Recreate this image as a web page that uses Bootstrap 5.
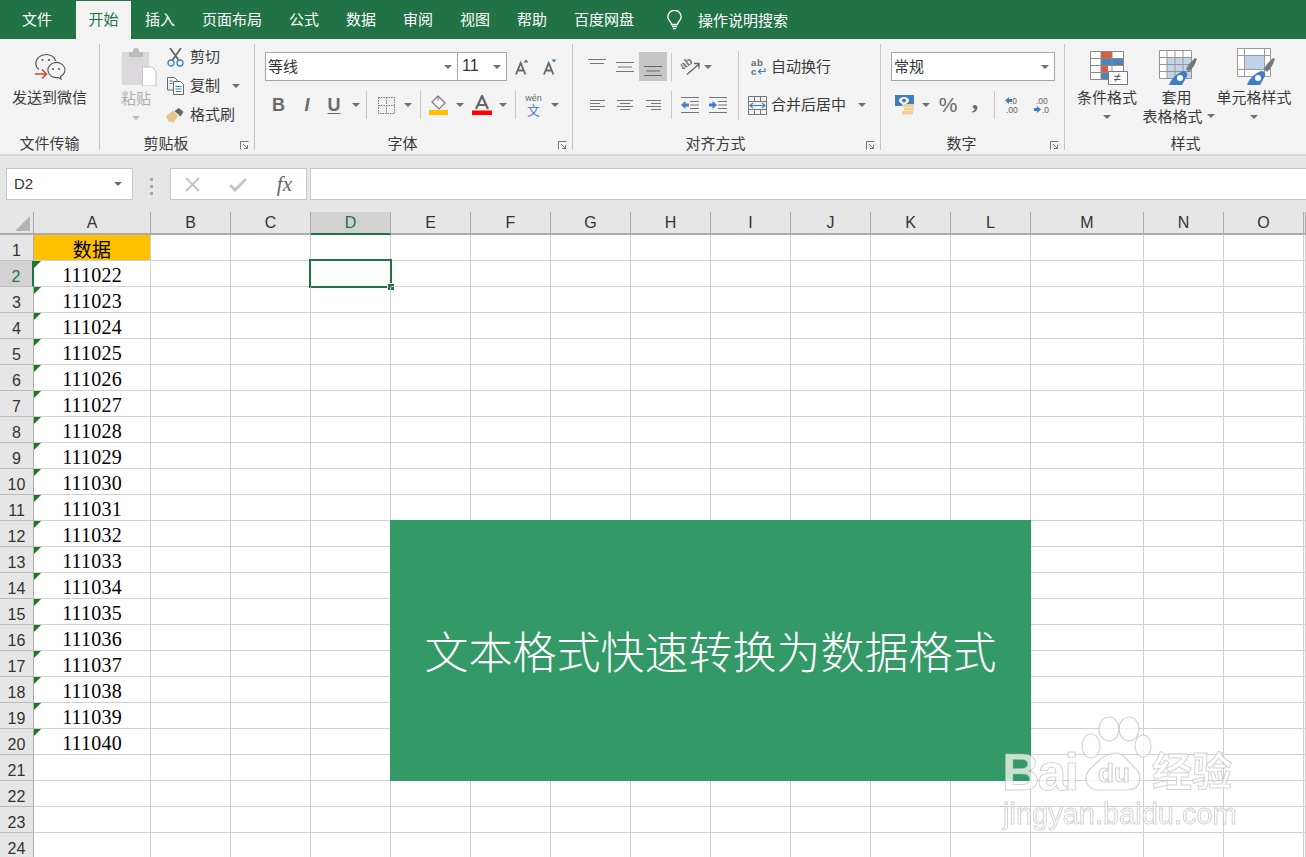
<!DOCTYPE html>
<html lang="zh-CN">
<head>
  <meta charset="UTF-8">
  <title>Excel</title>
  <link href="https://cdn.jsdelivr.net/npm/bootstrap@5.3.3/dist/css/bootstrap.min.css" rel="stylesheet">
  <style>
    body { font-family: "Noto Sans CJK SC", "Liberation Sans", sans-serif; background: #fff; height: 857px; width: 1306px; overflow: hidden; position: relative; color: #3b3b3b; font-size: 15px; line-height: 20px; white-space: nowrap; }
    svg { display: block; flex: none; }

    /* title tabs */
    .tabbar { background: #217346; height: 39px; flex-wrap: nowrap; }
    .tabbar .nav-link { color: #fff; padding: 0; height: 38px; margin-top: 1px; line-height: 36px; text-align: center; }
    .tabbar .nav-link.active { background: #f3f3f3; color: #217346; }
    .t74 { width: 74px; margin-right: 2px; } .t55 { width: 55px; margin-right: 1px; } .t56 { width: 56px; } .t58 { width: 58px; } .t88 { width: 88px; }
    .bulb { margin-left: 19px; margin-right: 16px; }
    .tellme { color: #fff; }

    /* ribbon */
    .ribbon { background: #f3f3f3; height: 117px; padding-top: 5px; border-bottom: 2px solid #d6d6d6; }
    .grp { height: 106px; border-right: 1px solid #c6c6c6; position: relative; flex: none; }
    .g1 { width: 100px; } .g2 { width: 155px; } .g3 { width: 318px; } .g4 { width: 308px; } .g5 { width: 184px; } .g6 { width: 241px; border-right: 0; }
    .grp-body { height: 92px; }
    .grp-label { height: 14px; line-height: 14px; text-align: center; font-size: 15px; }
    .has-launch .grp-label { padding-right: 22px; }
    .launch { position: absolute; right: 5px; bottom: 0; }
    .car { width: 0; height: 0; border-left: 4px solid transparent; border-right: 4px solid transparent; border-top: 4px solid #6f6f6f; flex: none; display: block; }
    .car.lt { border-top-color: #b9b9b9; }
    .faint { color: #aeaeae; }
    .vsep { width: 1px; height: 28px; background: #c6c6c6; flex: none; }
    .cell { height: 29px; flex: none; display: flex; align-items: center; justify-content: center; }
    .w8 { width: 8px; } .w9 { width: 9px; } .w10 { width: 10px; } .w12 { width: 12px; } .w14 { width: 14px; } .w16 { width: 16px; } .w20 { width: 20px; } .w24 { width: 24px; } .w26 { width: 26px; } .w27 { width: 27px; } .w28 { width: 28px; } .w30 { width: 30px; } .w31 { width: 31px; }
    .w5 { width: 5px; }
    .hl { background: #c6c6c6; }
    .r1 { height: 29px; margin-top: 8px; }
    .r2 { height: 30px; margin-top: 9px; }
    .pl10 { padding-left: 10px; }
    .nudge { padding-left: 4px; }
    .combo { height: 29px; background: #fff; border: 1px solid #a6a6a6; display: flex; align-items: center; padding: 0 5px 0 2px; justify-content: space-between; flex: none; color: #333; }
    .combo > span:first-child { padding-bottom: 2px; }
    .cf { width: 193px; } .cs { width: 50px; margin-left: -1px; padding-left: 4px; } .cn { width: 164px; }
    .size-num { font-family: "Liberation Sans", sans-serif; font-size: 16px; }
    .glyph { font-family: "Liberation Sans", sans-serif; font-weight: 700; color: #6a6a6a; font-size: 18px; }
    .glyph-i { font-style: italic; }
    .glyph-u { text-decoration: underline; text-underline-offset: 2px; }
    .glyph-n { font-family: "Liberation Sans", sans-serif; color: #6a6a6a; font-size: 21px; }
    .glyph-c { font-family: "Liberation Serif", serif; font-size: 26px; line-height: 16px; padding-bottom: 8px; }
    .wen { font-family: "Liberation Sans", sans-serif; font-size: 9px; line-height: 10px; color: #666; display: block; text-align: center; }
    .wen-c { font-size: 13px; line-height: 14px; color: #4a86c0; display: block; text-align: center; }

    .col-paste { width: 64px; padding: 4px 0 0 8px; }
    .paste-ico { margin-left: 5px; }
    .row-clip { height: 26px; margin-bottom: 3px; }
    .row-clip > span:nth-child(2) { padding-bottom: 2px; }
    .ico22 { width: 22px; margin-right: 4px; display: flex; justify-content: center; }
    .after-copy { margin-left: 12px; }
    .wrap-col { border-left: 1px solid #c6c6c6; height: 69px; margin-top: 7px; width: 142px; }
    .wrap-r1 { height: 29px; margin-top: 1px; padding-left: 12px; }
    .wrap-r2 { height: 30px; margin-top: 9px; padding-left: 9px; }
    .wrap-r1 span, .wrap-r2 span:first-of-type { padding-bottom: 2px; }
    .wrap-r2 .car { padding: 0; }
    .gap6 { margin-right: 5px; } .gap5 { margin-right: 4px; }
    .merge-car { margin-left: 12px; }
    .sty-icon { height: 37px; margin-top: 4px; display: flex; align-items: flex-end; }
    .sty-c1 { width: 71px; padding-left: 13px; }
    .sty-c2 { width: 81px; }
    .sty-c3 { width: 74px; }
    .sty-t { margin-top: 2px; height: 20px; }
    .sty-t2 { height: 19px; padding-bottom: 2px; }
    .sty-s1 { margin-left: 3px; } .sty-s2 { margin-left: 2px; } .sty-s3 { margin-left: 4px; }
    .wx-top { padding-top: 9px; }
    .wx-t { margin-top: 7px; }

    /* formula bar */
    .fbar { background: #e6e6e6; height: 56px; padding-top: 12px; }
    .fbox { height: 32px; background: #fff; border: 1px solid #c6c6c6; flex: none; }
    .namebox { width: 127px; margin-left: 6px; padding: 0 10px 0 7px; font-family: "Liberation Sans", sans-serif; font-size: 15px; color: #333; }
    .dots { width: 37px; }
    .dots i { display: block; width: 3px; height: 3px; background: #a6a6a6; margin: 2px 0; }
    .fbtn { width: 137px; padding: 0 14px; }
    .fx-mark { font-family: "Liberation Serif", serif; font-style: italic; font-size: 21px; color: #666; }
    .finput { flex: 1; margin-left: 3px; border-right: 0; }

    /* sheet */
    .sheet { border-collapse: separate; border-spacing: 0; table-layout: fixed; width: 1306px; }
    .sheet th { background: #e6e6e6; font-family: "Liberation Sans", sans-serif; font-weight: 400; font-size: 16px; text-align: center; color: #333; padding: 0; border-right: 1px solid #ababab; border-bottom: 2px solid #ababab; height: 23px; line-height: 20px; }
    .sheet th.corner { position: relative; }
    .sheet tbody th { border-bottom: 1px solid #bdbdbd; height: 26px; padding-top: 7px; line-height: 18px; }
    .sheet td { border-right: 1px solid #d0d0d0; border-bottom: 1px solid #d0d0d0; height: 26px; padding: 3px 0 0; text-align: center; position: relative; font-family: "Liberation Serif", serif; font-size: 20px; letter-spacing: .2px; line-height: 22px; color: #000; }
    .sheet th.cursel { background: #d2d2d2; color: #217346; border-bottom-color: #217346; }
    .sheet tbody th.cursel { border-bottom-color: #bdbdbd; border-right: 2px solid #217346; }
    .sheet td.head { background: #ffc000; font-family: "Noto Sans CJK SC", sans-serif; font-size: 19px; padding-top: 2px; line-height: 23px; }
    .tri::before { content: ""; position: absolute; left: 0; top: 0; border-top: 7px solid #1a7a1a; border-right: 7px solid transparent; }
    .tri-corner { position: absolute; left: 15px; bottom: 2px; border-bottom: 15px solid #b4b4b4; border-left: 15px solid transparent; }
    .selbox { position: absolute; left: -2px; top: -2px; width: 83px; height: 29px; border: 2px solid #217346; }
    .selbox::after { content: ""; position: absolute; right: -4px; bottom: -4px; width: 7px; height: 7px; background: #217346; border: 1px solid #fff; border-width: 1px 0 0 1px; }

    /* green banner */
    .banner { position: absolute; left: 390px; top: 520px; width: 641px; height: 261px; background: #339966; color: #fff; font-size: 44px; font-weight: 300; line-height: 261px; text-align: center; }

    /* watermark */
    .wm { position: absolute; left: 1000px; top: 715px; width: 240px; height: 120px; filter: blur(.4px); }
    .wm-txt { position: absolute; font-family: "Liberation Sans", sans-serif; font-weight: 700; color: rgba(255,255,255,.72); -webkit-text-stroke: 1px rgba(170,170,170,.5); line-height: 1; }
    .wm-bai { left: 2px; top: 31px; font-size: 52px; letter-spacing: -2px; }
    .wm-cn { left: 152px; top: 34px; font-size: 40px; font-family: "Noto Sans CJK SC", sans-serif; }
    .wm-url { left: 3px; top: 85px; font-size: 29px; font-weight: 400; }
    .wm svg { position: absolute; left: 78px; top: 0; }
  </style>
</head>
<body>
  <ul class="nav tabbar align-items-start">
    <li class="nav-item"><a class="nav-link t74">文件</a></li>
    <li class="nav-item"><a class="nav-link t55 active">开始</a></li>
    <li class="nav-item"><a class="nav-link t56">插入</a></li>
    <li class="nav-item"><a class="nav-link t88">页面布局</a></li>
    <li class="nav-item"><a class="nav-link t56">公式</a></li>
    <li class="nav-item"><a class="nav-link t58">数据</a></li>
    <li class="nav-item"><a class="nav-link t56">审阅</a></li>
    <li class="nav-item"><a class="nav-link t58">视图</a></li>
    <li class="nav-item"><a class="nav-link t56">帮助</a></li>
    <li class="nav-item"><a class="nav-link t88">百度网盘</a></li>
    <li class="d-flex align-items-center h-100 tellme">
      <svg class="bulb" width="15" height="20" viewBox="0 0 15 20" fill="none" stroke="#fff" stroke-width="1.3"><path d="M4.600 14.500c0-2.600-3.800-4.200-3.800-7.500a6.700 6.700 0 0 1 13.400 0c0 3.300-3.800 4.900-3.800 7.500z"/><path d="M5 16.500h5M6 18.700h3"/></svg>
      <span>操作说明搜索</span>
    </li>
  </ul>

  <div class="ribbon d-flex">
    <!-- 文件传输 -->
    <div class="grp g1 d-flex flex-column">
      <div class="grp-body d-flex flex-column align-items-center wx-top">
        <svg width="32" height="27" viewBox="0 0 32 27" fill="none" stroke="#555" stroke-width="1.1">
          <path d="M5 16.500C2.800 15 1.800 13 1.800 10.800 1.800 5.600 6.400 1.500 12 1.500c4.600 0 8.500 2.700 9.700 6.500"/>
          <path d="M14 18a8.500 7.500 0 1 1 12.500 5.500l.6 2.500-3.100-1.500A8.500 7.500 0 0 1 14 18z" fill="#f3f3f3"/>
          <circle cx="8.500" cy="7" r="1.100" fill="#555" stroke="none"/><circle cx="15" cy="7" r="1.100" fill="#555" stroke="none"/>
          <circle cx="19" cy="16" r="1" fill="#555" stroke="none"/><circle cx="25" cy="16" r="1" fill="#555" stroke="none"/>
          <path d="M1 21h11M8 16.500l4.500 4.500L8 25.500" stroke="#c8492c" stroke-width="1.500"/>
        </svg>
        <div class="wx-t">发送到微信</div>
      </div>
      <div class="grp-label">文件传输</div>
    </div>

    <!-- 剪贴板 -->
    <div class="grp g2 has-launch d-flex flex-column">
      <div class="grp-body d-flex">
        <div class="col-paste d-flex flex-column align-items-center">
          <svg class="paste-ico" width="36" height="38" viewBox="0 0 36 38">
            <path d="M1 4h27v33H1z" fill="#dcd9dc"/>
            <path d="M8 4h4V3C12 1.200 13 0 15 0s3 1.200 3 3v1h4v5H8z" fill="#bdbabd"/>
            <path d="M21.500 19H31l4 4v15H21.500z" fill="#fff" stroke="#c4c2c4"/>
          </svg>
          <div class="faint sty-t">粘贴</div>
          <span class="car lt mt-2"></span>
        </div>
        <div class="d-flex flex-column">
          <div class="row-clip d-flex align-items-center">
            <span class="ico22"><svg width="17" height="19" viewBox="0 0 17 19" fill="none"><path d="M3 0l8.500 12M14 0L5.500 12" stroke="#666" stroke-width="1.800"/><circle cx="4" cy="15" r="3" stroke="#3f7fc0" stroke-width="1.300"/><circle cx="13" cy="15" r="3" stroke="#3f7fc0" stroke-width="1.300"/></svg></span>
            <span>剪切</span>
          </div>
          <div class="row-clip d-flex align-items-center">
            <span class="ico22"><svg width="17" height="18" viewBox="0 0 17 18" fill="none" stroke="#666"><path d="M.5.500h7l2.500 2.500v10H.5z" fill="#f3f3f3"/><path d="M6.500 4.500h7l3 3v10h-10z" fill="#fff"/><path d="M8.500 9.500h6M8.500 12h6M8.500 14.500h6M2.500 4h3M2.500 6.500h3" stroke="#3f7fc0"/></svg></span>
            <span>复制</span>
            <span class="car after-copy"></span>
          </div>
          <div class="row-clip d-flex align-items-center">
            <span class="ico22"><svg width="18" height="15" viewBox="0 0 18 15"><path d="M0 8.500l7-6 5 5.500-5 7-2-1.500-1.500 1z" fill="#e6c48a"/><path d="M8.500 3L13 0l4.500 4-3 4.500z" fill="#666"/></svg></span>
            <span>格式刷</span>
          </div>
        </div>
      </div>
      <div class="grp-label">剪贴板</div>
      <svg class="launch" width="9" height="9" viewBox="0 0 9 9" fill="none" stroke="#777"><path d="M.5 8.500v-8h8M3 3l4.500 4.500M7.500 4v3.500H4"/></svg>
    </div>

    <!-- 字体 -->
    <div class="grp g3 has-launch d-flex flex-column">
      <div class="grp-body pl10">
        <div class="d-flex r1">
          <div class="combo cf"><span>等线</span><span class="car"></span></div>
          <div class="combo cs"><span class="size-num">11</span><span class="car"></span></div>
          <div class="cell w27 nudge"><svg width="15" height="16" viewBox="0 0 15 16"><path d="M1 15.500L5.700 4 10.400 15.500M2.800 11.500h5.800" fill="none" stroke="#6a6a6a" stroke-width="1.900"/><path d="M8.500 3.500L11 .5l2.500 3z" fill="#6a6a6a"/></svg></div>
          <div class="cell w28 nudge"><svg width="15" height="16" viewBox="0 0 15 16"><path d="M1 15.500L5.700 4 10.400 15.500M2.800 11.500h5.800" fill="none" stroke="#6a6a6a" stroke-width="1.900"/><path d="M8.500.5L11 3.500l2.500-3z" fill="#3f7fc0"/></svg></div>
        </div>
        <div class="d-flex r2 align-items-center">
          <div class="cell w27 glyph">B</div>
          <div class="cell w30 glyph glyph-i">I</div>
          <div class="cell w24 glyph glyph-u">U</div>
          <div class="cell w20"><span class="car"></span></div>
          <div class="cell w5 justify-content-start"><span class="vsep"></span></div>
          <div class="cell w31"><svg width="17" height="17" viewBox="0 0 17 17" fill="none" stroke="#777" stroke-dasharray="1.500 1"><path d="M.5.500h16v16H.5zM8.500.500v16M.5 8.500h16"/></svg></div>
          <div class="cell w12"><span class="car"></span></div>
          <div class="cell w12"><span class="vsep"></span></div>
          <div class="cell w26"><svg width="20" height="20" viewBox="0 0 20 20"><path d="M9 1l7 7-6 6-7-7z" fill="#fff" stroke="#777" stroke-width="1.200"/><path d="M9 1V6" stroke="#777"/><path d="M0 15h19v5H0z" fill="#ffc000"/></svg></div>
          <div class="cell w16"><span class="car"></span></div>
          <div class="cell w28"><svg width="20" height="20" viewBox="0 0 20 20"><path d="M4 14L10 1l6 13M6 10h8" fill="none" stroke="#666" stroke-width="2.200"/><path d="M0 15.500h20V20H0z" fill="#ff0000"/></svg></div>
          <div class="cell w14"><span class="car"></span></div>
          <div class="cell w10"><span class="vsep"></span></div>
          <div class="cell w27"><span><span class="wen">wén</span><span class="wen-c">文</span></span></div>
          <div class="cell w16"><span class="car"></span></div>
        </div>
      </div>
      <div class="grp-label">字体</div>
      <svg class="launch" width="9" height="9" viewBox="0 0 9 9" fill="none" stroke="#777"><path d="M.5 8.500v-8h8M3 3l4.500 4.500M7.500 4v3.500H4"/></svg>
    </div>

    <!-- 对齐方式 -->
    <div class="grp g4 has-launch d-flex flex-column">
      <div class="grp-body d-flex">
        <div class="pl10">
          <div class="d-flex r1">
            <div class="cell w28"><svg width="18" height="18" viewBox="0 0 18 18" stroke="#777" fill="none"><path d="M0 1.500h18M2 5.500h14"/></svg></div>
            <div class="cell w28"><svg width="18" height="10" viewBox="0 0 18 10" stroke="#777" fill="none"><path d="M0 .500h18M2 5h14M0 9.500h18"/></svg></div>
            <div class="cell w28 hl"><svg width="18" height="10" viewBox="0 0 18 10" stroke="#666" fill="none" class="mt-2"><path d="M0 .500h18M2 5h14M0 9.500h18"/></svg></div>
            <div class="cell w9"><span class="vsep"></span></div>
            <div class="cell w28"><svg width="24" height="26" viewBox="-2 -4 24 26"><text x="0" y="9" transform="rotate(-35 6 6)" font-family="Liberation Sans" font-size="11" font-weight="700" fill="#777">ab</text><path d="M7 16.500L18.500 6.500M14 5.500h5v5" fill="none" stroke="#666" stroke-width="1.300"/></svg></div>
            <div class="cell w8"><span class="car"></span></div>
          </div>
          <div class="d-flex r2 align-items-center">
            <div class="cell w28"><svg width="15" height="10" viewBox="0 0 15 10" stroke="#777" fill="none"><path d="M0 .500h15M0 3.500h10M0 6.500h15M0 9.500h10"/></svg></div>
            <div class="cell w28"><svg width="16" height="10" viewBox="0 0 16 10" stroke="#777" fill="none"><path d="M0 .500h16M3 3.500h10M0 6.500h16M3 9.500h10"/></svg></div>
            <div class="cell w28"><svg width="15" height="10" viewBox="0 0 15 10" stroke="#777" fill="none"><path d="M0 .500h15M5 3.500h10M0 6.500h15M5 9.500h10"/></svg></div>
            <div class="cell w9"><span class="vsep"></span></div>
            <div class="cell w28"><svg width="18" height="16" viewBox="0 0 18 16" fill="none"><path d="M0 .500h18M9 4.500h9M9 8h9M9 11.500h9M0 15.500h18" stroke="#777"/><path d="M0 8l4.500-4v2.500H8v3H4.500V12z" fill="#3f7fc0"/></svg></div>
            <div class="cell w28"><svg width="18" height="16" viewBox="0 0 18 16" fill="none"><path d="M0 .500h18M9 4.500h9M9 8h9M9 11.500h9M0 15.500h18" stroke="#777"/><path d="M8 8L3.500 4v2.500H0v3h3.500V12z" fill="#3f7fc0"/></svg></div>
          </div>
        </div>
        <div class="wrap-col ms-auto">
          <div class="wrap-r1 d-flex align-items-center">
            <svg class="gap6" width="15" height="17" viewBox="0 0 15 17"><text x="0" y="7.500" font-family="Liberation Sans" font-size="9.500" font-weight="700" fill="#666" letter-spacing=".8">ab</text><text x="0" y="16.500" font-family="Liberation Sans" font-size="9.500" font-weight="700" fill="#666">c</text><path d="M14 10v3.500H7.500M10 11l-2.500 2.500L10 16" fill="none" stroke="#3f7fc0" stroke-width="1.200"/></svg>
            <span>自动换行</span>
          </div>
          <div class="wrap-r2 d-flex align-items-center">
            <svg class="gap5" width="19" height="19" viewBox="0 0 19 19" fill="none"><path d="M.5.500h18v18H.5zM.5 5.500h18M.5 13.500h18M6.500 .5v5M12.500 .5v5M6.500 13.500v5M12.500 13.500v5" stroke="#777"/><path d="M2 9.500h15M5 7L2 9.500 5 12M14 7l3 2.500L14 12" stroke="#3f7fc0" stroke-width="1.200"/></svg>
            <span>合并后居中</span>
            <span class="car merge-car"></span>
          </div>
        </div>
      </div>
      <div class="grp-label">对齐方式</div>
      <svg class="launch" width="9" height="9" viewBox="0 0 9 9" fill="none" stroke="#777"><path d="M.5 8.500v-8h8M3 3l4.500 4.500M7.500 4v3.500H4"/></svg>
    </div>

    <!-- 数字 -->
    <div class="grp g5 has-launch d-flex flex-column">
      <div class="grp-body pl10">
        <div class="d-flex r1"><div class="combo cn"><span>常规</span><span class="car"></span></div></div>
        <div class="d-flex r2 align-items-center">
          <div class="cell w28"><svg width="20" height="20" viewBox="0 0 20 20"><path d="M0 0h19v11H0z" fill="#3f7fc0"/><ellipse cx="9" cy="5.500" rx="5" ry="3.500" fill="#fff"/><circle cx="9" cy="5.500" r="2" fill="#3f7fc0"/><path d="M7 9h12v3H7zM9 12.500h10v3H9zM7 16h11v3.500H7z" fill="#f3cf97"/></svg></div>
          <div class="cell w14"><span class="car"></span></div>
          <div class="cell w30 glyph-n">%</div>
          <div class="cell w24 glyph glyph-c">,</div>
          <div class="cell w14"><span class="vsep"></span></div>
          <div class="cell w24"><svg width="16" height="16" viewBox="0 0 16 16"><text x="5" y="7" font-family="Liberation Sans" font-size="8.500" fill="#666">.0</text><text x="1" y="15.500" font-family="Liberation Sans" font-size="8.500" fill="#666">.00</text><path d="M0 3.500L4 0v2h3v3H4v2z" fill="#3f7fc0"/></svg></div>
          <div class="cell w31"><svg width="16" height="16" viewBox="0 0 16 16"><text x="3" y="7" font-family="Liberation Sans" font-size="8.500" fill="#666">.00</text><text x="9" y="15.500" font-family="Liberation Sans" font-size="8.500" fill="#666">.0</text><path d="M8 12.500L4 9v2H1v3h3v2z" fill="#3f7fc0"/></svg></div>
        </div>
      </div>
      <div class="grp-label">数字</div>
      <svg class="launch" width="9" height="9" viewBox="0 0 9 9" fill="none" stroke="#777"><path d="M.5 8.500v-8h8M3 3l4.500 4.500M7.500 4v3.500H4"/></svg>
    </div>

    <!-- 样式 -->
    <div class="grp g6 d-flex flex-column">
      <div class="grp-body d-flex">
        <div class="sty-c1 d-flex flex-column align-items-center">
          <div class="sty-icon sty-s1"><svg width="38" height="34" viewBox="0 0 38 34" fill="none">
            <path d="M.5.500h33v28H.5z" fill="#fff"/>
            <path d="M11 .5h11v7H11zM11 14h7v7H11z" fill="#d95f3c"/><path d="M11 7.500h22v7H11zM11 21h11v7.500H11z" fill="#4f81bd"/>
            <path d="M.5.500h33v28H.5zM.5 7.500h33M.5 14.500h33M.5 21.500h33M11 .5v28M22 .5v28" stroke="#8a8a8a"/>
            <path d="M18.500 20.500h19v13h-19z" fill="#fff" stroke="#777"/><text x="23.500" y="31" font-family="Liberation Sans" font-size="13" fill="#555">≠</text>
          </svg></div>
          <div class="sty-t">条件格式</div>
          <span class="car mt-2"></span>
        </div>
        <div class="sty-c2 d-flex flex-column align-items-center">
          <div class="sty-icon sty-s2"><svg width="38" height="35" viewBox="0 0 38 35" fill="none">
            <path d="M.5.500h32v28H.5z" fill="#fff"/><path d="M8 7.500h25v21H8z" fill="#c3d4ea"/>
            <path d="M.5.500h32v28H.5zM.5 7.500h32M.5 14.500h32M.5 21.500h32M8 .5v28M16 .5v28M24 .5v28" stroke="#959595"/>
            <path d="M27 19l3-5 6-6 2 1-3 7-5 6z" fill="#777"/><path d="M10 35c2-6 8-12 14-14 3 0 5 2 4 5l-5 9z" fill="#3f7fc0"/><circle cx="21" cy="28" r="3" fill="#fff"/>
          </svg></div>
          <div class="sty-t">套用</div>
          <div class="d-flex align-items-center sty-t2"><span class="ms-1">表格格式</span><span class="car ms-1"></span></div>
        </div>
        <div class="sty-c3 d-flex flex-column align-items-center">
          <div class="sty-icon sty-s3"><svg width="38" height="37" viewBox="0 0 38 37" fill="none">
            <path d="M.5.500h33v28H.5z" fill="#fff"/><path d="M8 7.500h20v14H8z" fill="#bfd2e9"/>
            <path d="M.5.500h33v28H.5zM.5 7.500h33M.5 21.500h33M7.500 .5v28M27.500 .5v28" stroke="#9a9a9a"/>
            <path d="M27 21l3-5 6-6 2 1-3 7-5 6z" fill="#777"/><path d="M10 37c2-6 8-12 14-14 3 0 5 2 4 5l-5 9z" fill="#3f7fc0"/><circle cx="21" cy="30" r="3" fill="#fff"/>
          </svg></div>
          <div class="sty-t">单元格样式</div>
          <span class="car mt-2"></span>
        </div>
      </div>
      <div class="grp-label">样式</div>
    </div>
  </div>

  <div class="fbar d-flex align-items-start">
    <div class="fbox namebox d-flex align-items-center justify-content-between"><span>D2</span><span class="car"></span></div>
    <div class="dots d-flex flex-column align-items-center pt-2"><i></i><i></i><i></i></div>
    <div class="fbox fbtn d-flex align-items-center justify-content-between">
      <svg width="15" height="15" viewBox="0 0 15 15" stroke="#c4c4c4" stroke-width="2" fill="none"><path d="M1 1l13 13M14 1L1 14"/></svg>
      <svg width="18" height="15" viewBox="0 0 18 15" stroke="#c4c4c4" stroke-width="3" fill="none"><path d="M1 8l5 5L17 2"/></svg>
      <span class="fx-mark">fx</span>
    </div>
    <div class="fbox finput"></div>
  </div>

  <table class="sheet" id="sheet"></table>

  <div class="banner">文本格式快速转换为数据格式</div>

  <div class="wm">
    <span class="wm-txt wm-bai">Bai</span>
    <svg width="76" height="78" viewBox="0 0 76 78" fill="rgba(255,255,255,.72)" stroke="rgba(170,170,170,.5)" stroke-width="1.200">
      <ellipse cx="31" cy="14" rx="10" ry="12"/><ellipse cx="51" cy="14" rx="10" ry="12"/>
      <ellipse cx="13" cy="31" rx="9" ry="12"/><ellipse cx="65" cy="31" rx="8" ry="11"/>
      <path d="M38 38c8 0 11 8 18 14 8 6 9 22-6 23H20C7 74 5 62 12 54c7-6 14-16 26-16z"/>
      <text x="20" y="67" font-family="Liberation Sans" font-size="26" font-weight="700">du</text>
    </svg>
    <span class="wm-txt wm-cn">经验</span>
    <span class="wm-txt wm-url">jingyan.baidu.com</span>
  </div>

  <script>
    const colNames = ['A','B','C','D','E','F','G','H','I','J','K','L','M','N','O',''];
    const colWidths = [117,80,80,80,80,80,80,80,80,80,80,80,113,80,80,2];

    let html = '<colgroup><col style="width:34px">' + colWidths.map(w => `<col style="width:${w}px">`).join('') + '</colgroup>';
    html += '<thead><tr><th class="corner"><span class="tri-corner"></span></th>' +
      colNames.map(n => `<th class="${n === 'D' ? 'cursel' : ''}">${n}</th>`).join('') + '</tr></thead><tbody>';

    for (let r = 1; r <= 24; r++) {
      html += `<tr><th class="${r === 2 ? 'cursel' : ''}">${r}</th>`;
      colNames.forEach(n => {
        if (n === 'A' && r === 1) html += '<td class="head">数据</td>';
        else if (n === 'A' && r <= 20) html += `<td class="tri">${111020 + r}</td>`;
        else if (n === 'D' && r === 2) html += '<td><span class="selbox"></span></td>';
        else html += '<td></td>';
      });
      html += '</tr>';
    }
    document.getElementById('sheet').innerHTML = html + '</tbody>';
  </script>
  <script src="https://cdn.jsdelivr.net/npm/bootstrap@5.3.3/dist/js/bootstrap.bundle.min.js"></script>
</body>
</html>
